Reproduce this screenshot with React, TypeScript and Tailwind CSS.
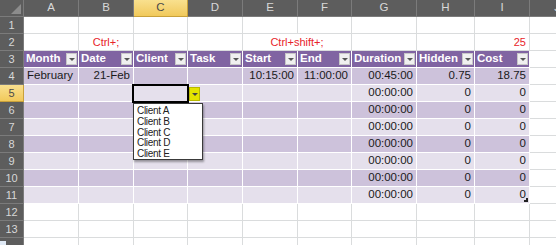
import React from 'react';

const LETTERS = ['A', 'B', 'C', 'D', 'E', 'F', 'G', 'H', 'I', 'J'];
const HEADERS = ['Month', 'Date', 'Client', 'Task', 'Start', 'End', 'Duration', 'Hidden', 'Cost'];
const CLIENTS = ['Client A', 'Client B', 'Client C', 'Client D', 'Client E'];

const EMPTY_ROW = ['', '', '', '', '', '', '00:00:00', '0', '0'];
const TABLE_ROWS = [
  ['February', '21-Feb', '', '', '10:15:00', '11:00:00', '00:45:00', '0.75', '18.75'],
  ...Array.from({ length: 7 }, () => EMPTY_ROW),
];

function RowHead({ n, active }: { n?: number; active?: boolean }) {
  return (
    <div
      className={
        active
          ? 'flex items-center justify-center border-b border-r border-[#c9a13a] bg-gradient-to-b from-[#f9e08e] to-[#f1c95a] text-[#4a4a4a] text-[11px]'
          : 'flex items-center justify-center border-b border-r border-[#7b7b7b] bg-[#5d5d5d] text-[#d8d8d8] text-[11px]'
      }
    >
      {n}
    </div>
  );
}

function Blank() {
  return <div className="border-b border-r border-[#dadcdd] bg-white" />;
}

function FilterButton() {
  return (
    <span className="absolute right-[1px] top-[2px] flex h-[12px] w-[11px] items-center justify-center border border-[#c8c8c8] bg-[#f0f0f0]">
      <span className="h-0 w-0 border-l-[3px] border-r-[3px] border-t-[3px] border-l-transparent border-r-transparent border-t-[#555]" />
    </span>
  );
}

export default function App() {
  return (
    <div className="relative h-[245px] w-[556px] overflow-hidden bg-white font-['Liberation_Sans',Arial,sans-serif]">
      <div className="grid grid-cols-[24px_55px_55px_54px_55px_55px_54px_65px_58px_55px_55px] auto-rows-[17px]">
        {/* Column letters */}
        <div className="relative border-b border-r border-[#7b7b7b] bg-[#5d5d5d]">
          <span className="absolute bottom-[2px] right-[2px] h-0 w-0 border-b-[10px] border-l-[10px] border-b-[#8c8c8c] border-l-transparent" />
        </div>
        {LETTERS.map((l) =>
          l === 'C' ? (
            <div
              key={l}
              className="flex items-center justify-center border-b border-r border-[#c9a13a] bg-gradient-to-b from-[#f9e08e] to-[#f1c95a] text-[11.5px] text-[#4a4a4a]"
            >
              {l}
            </div>
          ) : (
            <div
              key={l}
              className="flex items-center justify-center border-b border-r border-[#7b7b7b] bg-[#5d5d5d] text-[11.5px] text-[#d8d8d8]"
            >
              {l}
            </div>
          )
        )}

        {/* Row 1 */}
        <RowHead n={1} />
        {Array.from({ length: 10 }, (_, i) => (
          <Blank key={i} />
        ))}

        {/* Row 2: shortcuts */}
        <RowHead n={2} />
        <Blank />
        <div className="flex items-center justify-center border-b border-r border-[#dadcdd] text-[11px] text-[#e8242a]">
          Ctrl+;
        </div>
        <Blank />
        <Blank />
        <div className="col-span-2 flex items-center justify-center border-b border-r border-[#dadcdd] text-[11px] text-[#e8242a]">
          Ctrl+shift+;
        </div>
        <Blank />
        <Blank />
        <div className="flex items-center justify-end border-b border-r border-[#dadcdd] pr-[3px] text-[11px] text-[#e8242a]">
          25
        </div>
        <Blank />

        {/* Row 3: table header */}
        <RowHead n={3} />
        {HEADERS.map((h) => (
          <div
            key={h}
            className="relative flex items-center border-b border-r border-white bg-[#8064a2] pl-[2px] text-[11.5px] font-bold text-white"
          >
            {h}
            <FilterButton />
          </div>
        ))}
        <Blank />

        {/* Rows 4-11: banded table body */}
        {TABLE_ROWS.map((row, r) => (
          <React.Fragment key={r}>
            <RowHead n={r + 4} active={r === 1} />
            {row.map((v, c) => (
              <div
                key={c}
                className={`relative flex items-center border-b border-r border-white text-[11.5px] text-[#1a1a1a] ${
                  r % 2 === 0 ? 'bg-[#cdc2db]' : 'bg-[#e5e0ec]'
                } ${c === 0 ? 'justify-start pl-[3px]' : 'justify-end pr-[3px]'}`}
              >
                {v}
                {r === 7 && c === 8 && (
                  <span className="absolute bottom-[1px] right-[1px] h-[4px] w-[4px] border-b-2 border-r-2 border-[#222]" />
                )}
              </div>
            ))}
            <Blank />
          </React.Fragment>
        ))}

        {/* Rows 12-14 */}
        {[12, 13, undefined].map((n, k) => (
          <React.Fragment key={k}>
            <RowHead n={n} />
            {Array.from({ length: 10 }, (_, i) => (
              <Blank key={i} />
            ))}
          </React.Fragment>
        ))}
      </div>

      {/* Active cell C5 */}
      <div className="absolute left-[132px] top-[84px] h-[19px] w-[57px] border-2 border-black" />

      {/* Validation dropdown arrow */}
      <div className="absolute left-[189px] top-[87px] flex h-[14px] w-[11px] items-center justify-center border border-[#b8b800] bg-[#e4e400]">
        <span className="h-0 w-0 border-l-[3px] border-r-[3px] border-t-[3px] border-l-transparent border-r-transparent border-t-[#444]" />
      </div>

      {/* Validation list */}
      <div className="absolute left-[133px] top-[103px] h-[57px] w-[70px] border border-[#3a3a3a] bg-white pt-[1px] shadow-[1px_2px_2px_rgba(0,0,0,0.35)]">
        {CLIENTS.map((c) => (
          <div key={c} className="h-[10.8px] pl-[3px] text-[10px] leading-[11px] tracking-[-0.3px] text-[#222]">
            {c}
          </div>
        ))}
      </div>

      {/* Sheet tab corner */}
      <div className="absolute bottom-0 left-0 h-[4px] w-[6px] bg-[#dfe9f5]" />
    </div>
  );
}
